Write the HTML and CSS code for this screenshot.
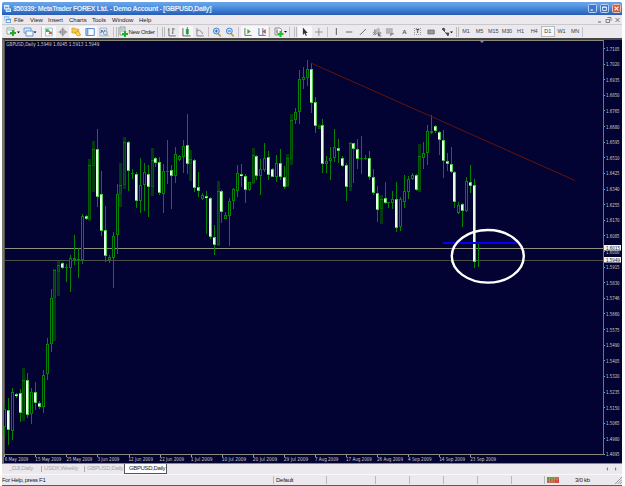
FILE: index.html
```html
<!DOCTYPE html>
<html lang="en">
<head>
<meta charset="utf-8">
<title>MetaTrader</title>
<link rel="stylesheet" href="styles.css">
</head>
<body>
<div class="window">
  <header class="titlebar">
    <svg class="logo" viewBox="0 0 8 8"><path d="M0 0h6v5H0z" fill="#d9ecff"/><path d="M1 2h4v2H1z" fill="#58a0e8"/><path d="M2 4h6v4H2z" fill="#e8f4ff"/><path d="M3 5h4v2H3z" fill="#6fb3ee"/></svg>
    <span class="title">350339: MetaTrader FOREX Ltd. - Demo Account - [GBPUSD,Daily]</span>
    <span class="winbtn"><svg viewBox="0 0 9 9"><path d="M2 6.500h3" stroke="#fff" stroke-width="1.400"/></svg></span>
    <span class="winbtn"><svg viewBox="0 0 9 9"><path d="M2 2.500h5v4.500H2zM2 3h5" fill="none" stroke="#fff"/></svg></span>
    <span class="winbtn close"><svg viewBox="0 0 9 9"><path d="M2 2l5 5M7 2L2 7" stroke="#fff" stroke-width="1.300"/></svg></span>
  </header>

  <nav class="menubar">
    <svg class="logo" viewBox="0 0 8 8"><path d="M0 0h6v5H0z" fill="#9cc8f0"/><path d="M1 2h4v2H1z" fill="#fff"/><path d="M2 3h6v5H2z" fill="#5d9fe0"/><path d="M3 5h4v2H3z" fill="#fff"/></svg>
    <span class="m-file">File</span><span class="m-view">View</span><span class="m-insert">Insert</span><span class="m-charts">Charts</span><span class="m-tools">Tools</span><span class="m-window">Window</span><span class="m-help">Help</span>
    <svg class="mdi" viewBox="0 0 24 8"><path d="M1 6h3" stroke="#666"/><path d="M10.500 1.500h3.500v3.500M9 3.500h3.500v3H9z" fill="none" stroke="#666" stroke-width=".8"/><path d="M18.500 2l4 4M22.500 2l-4 4" stroke="#666" stroke-width=".9"/></svg>
  </nav>

  <div class="toolbar">
    <span class="slot w18"><svg viewBox="0 0 18 12"><path d="M4 2h7v6H4z" fill="#fff" stroke="#7a9a7a" stroke-width=".8"/><path d="M5 4h5" stroke="#8ab"/><path d="M7 7h6M10 4v6" stroke="#1fae2c" stroke-width="2"/><path d="M14 5.500h3l-1.500 1.800z" fill="#000"/></svg></span>
    <span class="slot w20"><svg viewBox="0 0 20 12"><path d="M3 2h7v5H3z" fill="#d4e6fa" stroke="#5b8cc8" stroke-width=".8"/><path d="M5 5h7v5H5z" fill="#eef6ff" stroke="#4a80c4" stroke-width=".8"/><path d="M12.500 5.500h3L14 7.300z" fill="#000"/></svg></span>
    <i class="sep"></i>
    <span class="slot on"><svg viewBox="0 0 14 12"><path d="M3.500 2h7v8h-7z" fill="#f8fff8" stroke="#8ab0d0" stroke-width=".8"/><path d="M4 3h3v3H4z" fill="#3cb84a"/><path d="M7 5l3 3M7 8l3-2" stroke="#e04830" stroke-width="1.300"/></svg></span>
    <span class="slot"><svg viewBox="0 0 14 12"><circle cx="7" cy="6" r="2.500" fill="none" stroke="#888" stroke-width=".9"/><path d="M7 1.500v9M2.500 6h9" stroke="#777" stroke-width=".9"/></svg></span>
    <span class="slot on"><svg viewBox="0 0 14 12"><path d="M3 2h3l1 1h3v4H3z" fill="#f2c84e" stroke="#d89a20" stroke-width=".7"/><path d="M6 7l3-2 3 4-3 1z" fill="#ffd84a" stroke="#c98a18" stroke-width=".7"/></svg></span>
    <span class="slot on"><svg viewBox="0 0 14 12"><path d="M3 2.500h8.500v7H3z" fill="#fff" stroke="#4b86cf"/><path d="M3.500 3h2v6h-2z" fill="#6ba3e3"/></svg></span>
    <span class="slot"><svg viewBox="0 0 14 12"><path d="M3 2h7v8H3z" fill="#dbe8f6" stroke="#8fa9c6" stroke-width=".8"/><path d="M4 7l1-3 2 3 1-3" fill="none" stroke="#567"/><circle cx="8.500" cy="7" r="2" fill="#cfe6ff" stroke="#5888bb" stroke-width=".7"/><path d="M10 8.500l2 2" stroke="#c89030"/></svg></span>
    <i class="sep gap3"></i><i class="grip"></i>
    <span class="order"><svg viewBox="0 0 9 12"><path d="M1 1h5v8H1z" fill="#e8f5e8" stroke="#789" stroke-width=".8"/><path d="M2 3h3M2 5h3" stroke="#58a060" stroke-width=".7"/><path d="M3 8h6M6 5v6" stroke="#20b030" stroke-width="2"/></svg>New Order</span>
    <i class="sep"></i><i class="grip gap4"></i>
    <span class="slot"><svg viewBox="0 0 14 12"><path d="M4 2v8h7M8 2v6M4 4H3M8 3h2M8 7H7" fill="none" stroke="#587058" stroke-width=".9"/></svg></span>
    <span class="slot on"><svg viewBox="0 0 14 12"><path d="M4 2v8h8" fill="none" stroke="#555" stroke-width=".9"/><path d="M7 3h3v5H7z" fill="#28b038"/><path d="M8.500 1v8" stroke="#28903a"/></svg></span>
    <span class="slot"><svg viewBox="0 0 14 12"><path d="M4 2v8h7M4 5c3-2 4 0 6 3" fill="none" stroke="#777" stroke-width=".9"/></svg></span>
    <i class="sep gap1"></i>
    <span class="slot gap1"><svg viewBox="0 0 14 12"><path d="M8 7.500l3 3" stroke="#c8a440" stroke-width="1.800"/><circle cx="6.500" cy="5" r="3" fill="#c8e2ff" stroke="#3d86d4"/><path d="M5 5h3M6.500 3.500v3" stroke="#2260b0" stroke-width=".9"/></svg></span>
    <span class="slot"><svg viewBox="0 0 14 12"><path d="M8 7.500l3 3" stroke="#c8a440" stroke-width="1.800"/><circle cx="6.500" cy="5" r="3" fill="#c8e2ff" stroke="#3d86d4"/><path d="M5 5h3" stroke="#2260b0" stroke-width=".9"/></svg></span>
    <i class="sep gap1"></i>
    <span class="slot on gap2"><svg viewBox="0 0 14 12"><path d="M4 2v7.500h7" fill="none" stroke="#666" stroke-width=".9"/><path d="M6.500 3l3.500 2.500L6.500 8z" fill="#35b045"/></svg></span>
    <span class="slot on"><svg viewBox="0 0 14 12"><path d="M4 2v7.500h7M8 2v7" fill="none" stroke="#4a6a9a" stroke-width=".9"/><path d="M11 3v5L7.500 5.500z" fill="#c85a30"/></svg></span>
    <i class="sep gap1"></i>
    <span class="slot w18 gap1"><svg viewBox="0 0 18 12"><path d="M4 2h5l1.500 1.500V9H4z" fill="#f4f8f4" stroke="#777" stroke-width=".8"/><path d="M6 3.500v4" stroke="#555"/><path d="M6.500 8h6M9.500 5v6" stroke="#1fc02c" stroke-width="2"/><path d="M13 5h3l-1.500 1.800z" fill="#000"/></svg></span>
    <i class="sep"></i><i class="grip gap4"></i>
    <span class="slot on gap1"><svg viewBox="0 0 14 12"><path d="M5 1.500v7.500l1.800-1.600L8 10l1-.5-1-2.500h2z" fill="#333"/></svg></span>
    <span class="slot"><svg viewBox="0 0 14 12"><path d="M7 2v8M3 6h8" stroke="#888" stroke-width=".9"/></svg></span>
    <i class="sep gap1"></i>
    <span class="slot gap1"><svg viewBox="0 0 14 12"><path d="M7.500 2v7" stroke="#555"/></svg></span>
    <span class="slot"><svg viewBox="0 0 14 12"><path d="M4 6h6.500" stroke="#666"/></svg></span>
    <span class="slot"><svg viewBox="0 0 14 12"><path d="M4 9l6-6" stroke="#666"/></svg></span>
    <span class="slot"><svg viewBox="0 0 14 12"><path d="M3 7l6-5M3 9l7-6M5 9l5-4M5 3v6" stroke="#777" stroke-width=".8"/><path d="M8.500 7h3M8.500 8.500h2M8.500 10h3M8.500 7v3" stroke="#444" stroke-width=".8"/></svg></span>
    <span class="slot"><svg viewBox="0 0 14 12"><path d="M3 3h7M3 5h7M3 7h7" stroke="#777" stroke-width=".9"/><path d="M8 10V8h3" fill="none" stroke="#444" stroke-width=".8"/></svg></span>
    <span class="slot letter">A</span>
    <span class="slot"><span class="boxed">T</span></span>
    <span class="slot"><svg viewBox="0 0 14 12"><path d="M4 4h6.500v4H4z" fill="#999" stroke="#666" stroke-width=".8"/></svg></span>
    <span class="slot w18"><svg viewBox="0 0 18 12"><path d="M4 3l2-1 1 2-1 1zM6 5l3 3M8 7l3 0-1 3z" fill="#444" stroke="#444" stroke-width=".8"/><path d="M12 5.500h3l-1.500 1.800z" fill="#000"/></svg></span>
    <i class="grip"></i>
    <span class="tf">M1</span><span class="tf">M5</span><span class="tf">M15</span><span class="tf">M30</span><span class="tf">H1</span><span class="tf">H4</span><span class="tf on">D1</span><span class="tf">W1</span><span class="tf">MN</span>
    <i class="sep"></i>
  </div>

  <main class="chart">
    <svg id="chart" viewBox="4 40 618 423" width="618" height="423"></svg>
  </main>

  <div class="tabs">
    <span class="tab t1">_DJI,Daily</span><span class="tab t2">USDX,Weekly</span><span class="tab t3">GBPUSD,Daily</span><span class="tab active">GBPUSD,Daily</span>
    <svg class="arrows" viewBox="0 0 14 8"><path d="M3 2L1.500 4 3 6zM10 2l1.500 2L10 6z" fill="#777"/></svg>
  </div>

  <footer class="status">
    <span class="help">For Help, press F1</span>
    <span class="cell profile">Default</span>
    <span class="cell c49"></span><span class="cell c34"></span><span class="cell c34"></span><span class="cell c34"></span><span class="cell c34"></span><span class="cell c32"></span>
    <span class="cell conn"><svg viewBox="0 0 12 6"><path d="M0 0h12v6H0z" fill="#b56a48"/><path d="M0 0h7v3H0z" fill="#5f9a3c"/><path d="M7 3h5v3H7z" fill="#d04038"/><path d="M2.500 0v6M5 0v6M7.500 0v6M10 0v6" stroke="#e6dcc0" stroke-width=".3"/></svg><span>3/0 kb</span></span>
    <svg class="resize" viewBox="0 0 8 8"><path d="M1 8l7-7M3.500 8L8 3.500M6 8l2-2" stroke="#999"/></svg>
  </footer>
</div>
<script src="chart.js"></script>
</body>
</html>
```
FILE: styles.css
```css
* { box-sizing: border-box; }
body {
  margin: 0;
  background: #fff;
  font-family: "Liberation Sans", Arial, sans-serif;
  font-size: 6px;
  color: #222;
  overflow: hidden;
}
svg { display: block; flex: none; }
.window {
  width: 620px;
  height: 484px;
  margin: 2px 0 0 2px;
  display: flex;
  flex-direction: column;
  background: #ece9ee;
  border-bottom: 1px solid #2a5fc4;
}

.titlebar {
  height: 13px;
  flex: none;
  display: flex;
  align-items: center;
  padding: 0 1px 0 2px;
  gap: 3px;
  background: linear-gradient(#6aa4e8 0, #5b9ae6 25%, #3c7fd4 60%, #2a5cb4 100%);
  border-radius: 2px 2px 0 0;
}
.logo { width: 7px; height: 7px; }
.title {
  flex: 1;
  margin-left: -1px;
  font-size: 7px;
  font-weight: bold;
  line-height: 9px;
  letter-spacing: -.37px;
  color: #e4eefb;
  white-space: nowrap;
}
.winbtn {
  width: 9px;
  height: 9px;
  border: 1px solid #b9d2f4;
  border-radius: 1.5px;
  background: #3a76d6;
}
.winbtn svg { width: 7px; height: 7px; }
.winbtn.close { background: #d8583c; border-color: #edc0b4; }

.menubar {
  height: 10px;
  flex: none;
  display: flex;
  align-items: center;
  padding-left: 2px;
  line-height: 8px;
  border-bottom: 1px solid #cbc8cc;
}
.menubar span { flex: none; white-space: nowrap; }
.m-file { width: 15px; margin-left: 3px; }
.m-view { width: 18px; margin-left: 1px; }
.m-insert { width: 21px; }
.m-charts { width: 23px; }
.m-tools { width: 20px; }
.m-window { width: 27px; }
.mdi { width: 24px; height: 8px; margin-left: auto; margin-right: 1px; }

.toolbar {
  height: 13px;
  flex: none;
  display: flex;
  align-items: center;
  padding-left: 1px;
}
.slot {
  flex: none;
  width: 13.7px;
  height: 12px;
  display: flex;
  align-items: center;
  justify-content: center;
}
.slot svg { width: 100%; height: 12px; }
.on { background: #f7f6f8; }
.w18 { width: 18px; }
.w20 { width: 20px; }
.sep { flex: none; width: 1px; height: 10px; background: #c4c1c6; }
.grip { flex: none; width: 3px; height: 10px; border: solid #bdbabf; border-width: 0 1px; }
.gap1 { margin-left: 1px; }
.gap2 { margin-left: 2px; }
.gap3 { margin: 0 2px 0 3px; }
.gap4 { margin-left: 4px; }
.order {
  flex: none;
  width: 38px;
  display: flex;
  align-items: center;
  white-space: nowrap;
  letter-spacing: -.3px;
}
.order svg { width: 9px; height: 12px; }
.letter { font-weight: bold; color: #555; padding-left: 1px; }
.boxed {
  width: 7px;
  height: 7px;
  border: 1px dotted #999;
  font: bold 6px/5px "Liberation Sans", sans-serif;
  text-align: center;
  color: #444;
}
.tf {
  flex: none;
  width: 13.65px;
  line-height: 11px;
  font-size: 5.5px;
  letter-spacing: -.1px;
  text-align: center;
  color: #444;
}
.tf.on { border: 1px solid #bbb; line-height: 9px; }

.chart {
  height: 425px;
  flex: none;
  border: solid #777;
  border-width: 2px 0 0 2px;
  border-top-color: #444;
  background: #020233;
}
.tick { font-family: "DejaVu Sans Condensed", "DejaVu Sans", sans-serif; font-size: 5.5px; fill: #d2d2c0; }
.tick.tag { fill: #111; }

.tabs {
  height: 11px;
  flex: none;
  display: flex;
  align-items: flex-start;
  border-top: 1px solid #888;
  line-height: 9px;
}
.tab { flex: none; color: #aaa8ac; white-space: nowrap; letter-spacing: -.35px; }
.t1 { width: 39px; padding-left: 7px; }
.t2 { width: 43px; padding-left: 3px; }
.t3 { width: 40px; padding-left: 3px; }
.t2, .t3 { background: linear-gradient(#aaa, #aaa) 0 2px / 1px 6px no-repeat; }
.active {
  width: 43px;
  height: 10px;
  padding-left: 4px;
  background: #fff;
  color: #222;
  border: solid #555;
  border-width: 0 1px 1px;
}
.arrows { width: 14px; height: 8px; margin: 1px 3px 0 auto; }

.status {
  flex: 1;
  display: flex;
  align-items: center;
  line-height: 8px;
  border-top: 1px solid #f8f7f9;
}
.help { width: 271px; flex: none; letter-spacing: -.35px; }
.cell {
  flex: none;
  height: 8px;
  border-left: 1px solid #bbb8bd;
  padding-left: 2px;
  letter-spacing: -.25px;
}
.profile { width: 53px; }
.c49 { width: 49px; }
.c34 { width: 34px; }
.c32 { width: 33px; }
.conn { width: 66px; display: flex; align-items: center; gap: 16px; }
.conn svg { width: 12px; height: 6px; }
.resize { width: 8px; height: 8px; margin-left: auto; }
```
FILE: chart.js
```js
// Each candle: kind, high, body top, body bottom, low (y in thirds of a pixel).
// h = hollow (bull), w = white (bear), d = dense (bull, dark fill)
const candles = `
h 1216 1228 1280 1307|w 1193 1229 1290 1334|h 1164 1177 1292 1320|w 1179 1181 1187 1195|w 1167 1179 1238 1266
d 1105 1140 1240 1262|w 1119 1140 1246 1253|h 1164 1177 1243 1272|w 1146 1177 1208 1230|w 1203 1208 1220 1226
h 1110 1124 1221 1240|h 1014 1032 1123 1141|h 867 895 1033 1056|d 807 810 895 1022|d 783 794 815 887
w 787 789 803 806|h 792 800 804 847|h 765 774 803 877|h 705 775 780 794|h 744 776 780 835
h 643 649 781 791|w 645 649 657 660|d 478 495 656 662|d 423 447 499 575|w 388 447 590 622
w 513 583 693 707|w 618 689 767 786|h 765 771 781 790|h 696 708 773 863|h 552 581 706 762
d 490 555 582 622|d 411 426 556 567|w 423 425 514 573|h 508 518 523 537|w 516 521 603 623
h 474 555 603 639|h 490 517 555 632|w 495 521 560 650|d 444 481 560 587|w 472 475 489 502
w 472 486 580 584|h 492 513 581 638|h 420 512 516 552|w 495 510 527 627|h 442 462 527 549
h 464 469 479 483|h 420 438 471 518|w 342 436 492 523|d 450 478 491 543|w 477 479 563 576
w 516 561 572 590|h 580 585 597 600|w 572 588 593 702|w 591 593 710 716|w 675 710 735 764
d 543 574 735 738|w 570 573 637 669|h 636 645 656 658|h 595 604 647 738|h 564 568 603 627
h 496 520 572 590|w 492 522 528 560|w 522 529 570 609|h 545 547 569 574|d 444 466 548 553
w 464 468 527 540|h 477 508 527 584|h 430 473 509 516|w 453 471 524 540|w 504 507 530 532
h 465 489 532 545|w 447 489 531 540|w 497 530 561 566|d 462 475 557 560|d 342 361 478 495
h 324 336 359 371|h 210 238 337 373|h 201 230 239 267|h 180 208 233 259|w 188 208 308 340
w 292 306 379 398|d 372 378 386 388|w 357 376 493 519|h 469 484 491 518|h 441 474 484 540
h 387 442 475 487|w 417 444 454 488|w 469 474 497 500|w 488 495 561 604|d 427 430 562 574
w 428 430 448 548|w 418 446 476 507|h 408 473 477 523|h 466 473 477 480|w 454 474 530 540
w 508 530 580 584|w 558 579 630 666|d 584 596 628 671|w 545 595 608 612|h 605 606 610 625
h 572 598 609 626|w 546 597 684 695|h 590 598 682 693|h 525 574 605 625|h 528 537 577 597
h 520 525 537 540|w 523 525 569 573|d 432 468 569 575|h 426 459 474 507|h 375 393 459 495
h 345 393 398 402|w 375 378 394 398|w 393 395 420 465|w 390 420 483 534|w 459 483 492 513
w 441 492 516 519|w 513 516 606 625|h 607 616 638 641|w 610 612 634 681|h 531 544 632 635
w 495 546 557 580|w 537 555 785 803|l 728 728 800 800`.trim().split(/[|\n]/);

const svg = document.getElementById('chart');
function add(name, attrs, text) {
  const el = document.createElementNS('http://www.w3.org/2000/svg', name);
  for (const key in attrs) el.setAttribute(key, attrs[key]);
  if (text) el.textContent = text;
  svg.appendChild(el);
}
function box(x, y, width, height, fill) {
  add('rect', { x, y, width, height, fill });
}
function label(x, y, width, text, cls) {
  add('text', { x, y, textLength: width, lengthAdjust: 'spacingAndGlyphs', class: cls || 'tick' }, text);
}

// Frame, price levels and axes
box(4, 40, 1, 415, '#55554c');
box(5, 40, 598, 1, '#8a8a7c');
box(5, 248, 598, 1, '#8f8f80');
box(5, 260, 598, 1, '#4c5048');

// Candles
candles.forEach((row, i) => {
  const [kind, ...values] = row.split(' ');
  const [high, top, bottom, low] = values.map(v => Math.round(v / 3));
  const x = Math.floor(4.5 + i * 3.883);
  const tall = Math.max(bottom - top, 1);
  const green = '#048204';
  if (kind === 'd') {
    box(x - 1, high, 3, low - high, '#023a10');
    box(x - 1, top, 3, tall, '#045c08');
    box(x, top + 1, 1, Math.max(tall - 2, 0), '#023a10');
    box(x - 1, top, 3, 1, '#087c08');
    return;
  }
  box(x, high, 1, low - high, green);
  if (kind === 'h') {
    box(x - 1, top, 3, tall, green);
    if (tall > 2) box(x, top + 1, 1, tall - 2, '#020233');
  } else if (kind === 'w') {
    box(x - 1, top, 3, tall, '#4cc84c');
    box(x - 1, top + 1, 2, Math.max(tall - 2, 1), '#e4ffe4');
  }
});

// Annotations
add('path', { d: 'M311 63L575 180.500', stroke: '#641408', 'stroke-width': 1, fill: 'none' });
box(443, 242, 76, 2, '#0000f4');
add('ellipse', { cx: 487.8, cy: 256.3, rx: 36, ry: 26.3, fill: 'none', stroke: '#fff', 'stroke-width': 2.4 });
add('path', { d: 'M479 40h6l-3 3z', fill: '#8a8a90' });

// Price scale
box(603, 40, 1, 415, '#77775a');
for (let i = 0; i < 27; i++) {
  const y = 48.5 + i * 15.615;
  const price = i === 16 ? '1.5746' : (1.7105 - i * 0.0085).toFixed(4);
  box(604, Math.round(y - 0.5), 1, 1, '#a0a090');
  label(606, y + (i === 13 ? 2.8 : 2), 13.6, price);
}
[[248, '1.6015'], [260, '1.5949']].forEach(([y, price]) => {
  box(604, y - 3, 17, 5.500, '#f4f4f4');
  label(606, y + 1.7, 14, price, 'tick tag');
});

// Time scale
box(4, 454, 600, 1, '#8a8a7c');
['6 May', '15 May', '25 May', '3 Jun', '12 Jun', '22 Jun', '1 Jul', '10 Jul', '20 Jul', '29 Jul',
 '7 Aug', '17 Aug', '26 Aug', '4 Sep', '14 Sep', '23 Sep'].forEach((day, i) => {
  const x = 4.3 + i * 31.06;
  box(Math.round(x), 455, 1, 2, '#a0a090');
  const width = (day.length === 6 ? 26 : 23.5) - (day.includes('Ju') ? 1.5 : 0);
  label(x + (i ? 0 : 0.5), 461, width, day + ' 2009');
});

label(6.300, 46, 93, 'GBPUSD,Daily  1.5949 1.6045 1.5913 1.5949');
```
